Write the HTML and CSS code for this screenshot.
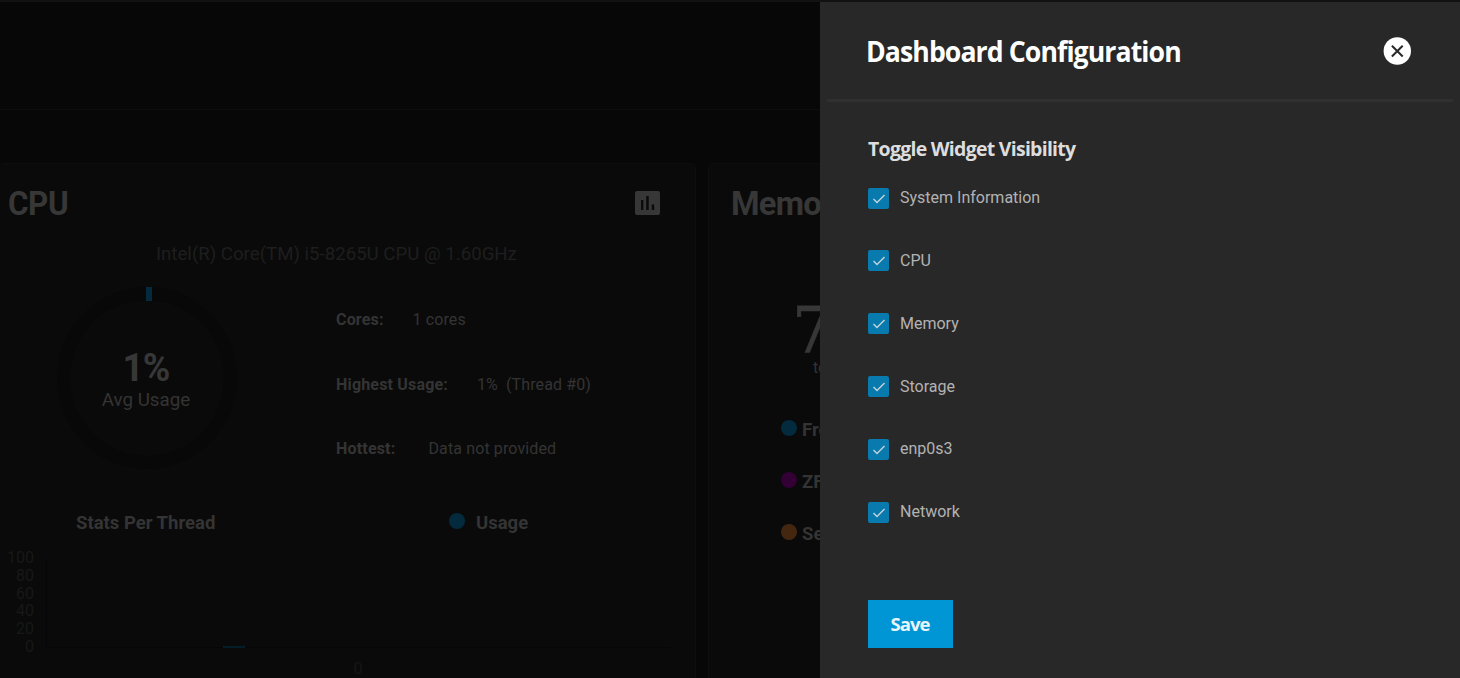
FILE: index.html
```html
<!DOCTYPE html>
<html lang="en">
<head>
<meta charset="utf-8">
<title>Dashboard</title>
<link rel="stylesheet" href="styles.css">
</head>
<body>
<div class="app">
  <header class="topbar"></header>
  <main class="cards">
    <section class="card cpu">
      <div class="card-head">
        <h2 class="card-title">CPU</h2>
        <svg class="report" viewBox="0 0 25 24"><path fill-rule="evenodd" d="M2 0h21a2 2 0 0 1 2 2v20a2 2 0 0 1-2 2H2a2 2 0 0 1-2-2V2a2 2 0 0 1 2-2zM6 9v10h2.300V9zM11.200 5v14h2.500V5zM16.700 13.500v5.500h2.500v-5.500z"/></svg>
      </div>
      <p class="model">Intel(R) Core(TM) i5-8265U CPU @ 1.60GHz</p>
      <div class="summary">
        <div class="gauge">
          <strong class="percent">1%</strong>
          <span class="caption">Avg Usage</span>
          <i class="tick"></i>
        </div>
        <ul class="facts">
          <li><b class="k-cores">Cores:</b><span>1 cores</span></li>
          <li><b class="k-high">Highest Usage:</b><span class="pct">1%</span><span>(Thread #0)</span></li>
          <li><b class="k-hot">Hottest:</b><span>Data not provided</span></li>
        </ul>
      </div>
      <div class="legend">
        <h3 class="stats">Stats Per Thread</h3>
        <i class="dot blue"></i><h3 class="usage">Usage</h3>
      </div>
      <div class="chart">
        <div class="axis"><span>100</span><span>80</span><span>60</span><span>40</span><span>20</span><span>0</span></div>
        <div class="plot"><div class="grid"><i class="bar"></i></div><span class="x-label">0</span></div>
      </div>
    </section>
    <section class="card memory">
      <h2 class="card-title">Memory</h2>
      <div class="amount">7</div>
      <div class="total">total available</div>
      <ul class="mem-list">
        <li><i class="dot blue"></i>Free</li>
        <li><i class="dot purple"></i>ZFS Cache</li>
        <li><i class="dot orange"></i>Services</li>
      </ul>
    </section>
  </main>
  <aside class="drawer">
    <div class="drawer-head">
      <h1 class="drawer-title">Dashboard Configuration</h1>
      <svg class="close" viewBox="0 0 28 28"><circle cx="14.300" cy="14" r="13.700" fill="#fff"/><path d="M8.900 8.700l10.800 10.800M19.700 8.700L8.900 19.500" stroke="#282828" stroke-width="2"/></svg>
    </div>
    <form class="drawer-body">
      <h4 class="section-title">Toggle Widget Visibility</h4>
      <div class="options">
        <label class="option"><span class="box"><svg viewBox="0 0 21 21"><path d="M5.500 11l3.500 3.500 7.500-7.500"/></svg></span>System Information</label>
        <label class="option"><span class="box"><svg viewBox="0 0 21 21"><path d="M5.500 11l3.500 3.500 7.500-7.500"/></svg></span>CPU</label>
        <label class="option"><span class="box"><svg viewBox="0 0 21 21"><path d="M5.500 11l3.500 3.500 7.500-7.500"/></svg></span>Memory</label>
        <label class="option"><span class="box"><svg viewBox="0 0 21 21"><path d="M5.500 11l3.500 3.500 7.500-7.500"/></svg></span>Storage</label>
        <label class="option"><span class="box"><svg viewBox="0 0 21 21"><path d="M5.500 11l3.500 3.500 7.500-7.500"/></svg></span>enp0s3</label>
        <label class="option"><span class="box"><svg viewBox="0 0 21 21"><path d="M5.500 11l3.500 3.500 7.500-7.500"/></svg></span>Network</label>
      </div>
      <button class="save" type="button">Save</button>
    </form>
  </aside>
</div>
</body>
</html>
```
FILE: styles.css
```css
* { box-sizing: border-box; }
body, h1, h2, h3, h4, p, ul { margin: 0; padding: 0; }
ul { list-style: none; }
body { background: #070707; font-family: Roboto, sans-serif; font-size: 16px; color: #343434; }
.app { position: relative; width: 1460px; height: 678px; overflow: hidden; border-top: 2px solid #121212; }
.topbar { height: 108px; border-bottom: 1px solid #0d0d0d; background: #070707; }
.cards { display: flex; gap: 12px; padding-top: 53px; }
.card { height: 560px; background: #0a0a0a; border: 1px solid #0e0e0e; border-radius: 6px; flex: none; }
.cpu { width: 698px; margin-left: -2px; padding-left: 1px; }
.memory { width: 697px; }
.card-head { display: flex; justify-content: space-between; align-items: center; padding: 0 35px 0 0; }
.card-title { font-size: 34px; font-weight: 700; line-height: 40px; letter-spacing: -.500px; color: #373737; margin: 19px 0 0 8px; transform: scaleX(.925); transform-origin: left; }
.memory .card-title { margin-left: 22px; letter-spacing: -.800px; transform: scaleX(.960); }
.report { width: 25px; height: 24px; fill: #373737; margin-top: 19px; }
.model { font-size: 18.650px; line-height: 24px; margin: 19px 0 0 156px; color: #1e1e1e; white-space: nowrap; }
.summary { display: flex; height: 205px; margin-top: 21px; }
.gauge { position: relative; width: 180px; height: 182px; margin-left: 57px; border: 13px solid #080808; border-radius: 50%; display: flex; flex-direction: column; align-items: center; padding: 48px 2px 0 0; flex: none; }
.percent { font-size: 38px; line-height: 40px; font-weight: 700; letter-spacing: -1px; color: #373737; transform: scaleX(.98); }
.caption { font-size: 18.800px; line-height: 24px; white-space: nowrap; }
.tick { position: absolute; left: 76px; top: -13px; width: 6px; height: 14px; background: #032b3d; }
.facts { margin: 23px 0 0 99px; }
.facts li { display: flex; height: 64.500px; line-height: 20px; white-space: nowrap; }
.facts span { letter-spacing: .120px; }
.facts b { font-weight: 700; letter-spacing: .180px; }
.k-cores { width: 76.500px; }
.k-high { width: 141px; }
.k-hot { width: 92.500px; }
.pct { width: 29px; }
.legend { display: flex; align-items: center; margin: 19px 0 0 76px; height: 24px; }
.legend h3 { font-size: 18.500px; font-weight: 700; letter-spacing: 0; line-height: 24px; white-space: nowrap; }
.stats { width: 373px; }
.usage { margin-left: 11px; }
.dot { display: block; width: 16px; height: 16px; border-radius: 50%; flex: none; }
.blue { background: #032b3d; }
.purple { background: #330035; }
.orange { background: #452710; }
.legend .dot { margin-top: -4px; }
.chart { display: flex; margin-top: 14px; }
.axis { width: 34px; display: flex; flex-direction: column; text-align: right; color: #181818; line-height: 17.800px; }
.plot { margin: 9px 0 0 12px; width: 624px; }
.grid { height: 90px; border-left: 1px solid #060606; border-bottom: 1px solid #060606; display: flex; align-items: flex-end; padding-left: 176px; }
.bar { width: 22px; height: 2px; background: #041e29; margin-bottom: -1px; }
.x-label { display: block; text-align: center; line-height: 16px; margin-top: 13px; color: #161616; }
.amount { font-family: "DejaVu Serif", serif; font-size: 63px; line-height: 64px; margin: 76px 0 0 83px; color: #373737; -webkit-text-stroke: .6px #373737; }
.total { margin: -5px 0 0 104px; line-height: 20px; }
.mem-list { margin: 26px 0 0 72px; font-size: 18.500px; font-weight: 700; }
.mem-list li { display: flex; align-items: center; gap: 5px; height: 52px; }
.mem-list .dot { margin-top: -4px; }
.drawer { position: absolute; left: 820px; top: 0; width: 640px; height: 676px; background: #282828; }
.drawer-head { display: flex; justify-content: space-between; align-items: center; height: 100px; margin: 0 7px; padding: 0 42px 0 39px; border-bottom: 3px solid #303030; }
.drawer-title { font-family: "Open Sans", sans-serif; font-size: 29px; font-weight: 700; color: #fff; letter-spacing: -1px; white-space: nowrap; transform: scaleX(.919); transform-origin: left; }
.close { width: 28px; height: 28px; }
.drawer-body { padding: 34px 0 0 48px; }
.section-title { font-family: "Open Sans", sans-serif; font-size: 19.500px; font-weight: 700; line-height: 26px; color: #ddd; letter-spacing: -.740px; white-space: nowrap; }
.options { padding-top: 26px; }
.option { display: flex; height: 62.850px; line-height: 20px; color: #b3b3b3; gap: 11px; white-space: nowrap; }
.box { width: 21px; height: 21px; margin-top: -.400px; border-radius: 2px; background: #087aae; flex: none; }
.box svg { display: block; width: 21px; height: 21px; }
.box path { fill: none; stroke: #c5d4da; stroke-width: 1.400; }
.save { display: block; width: 85px; height: 48px; margin-top: 35px; padding: 0 1px 2px 0; border: 0; background: #0095d5; color: #e8f5fc; font: 700 18.500px "Open Sans", sans-serif; letter-spacing: -.900px; }
```
